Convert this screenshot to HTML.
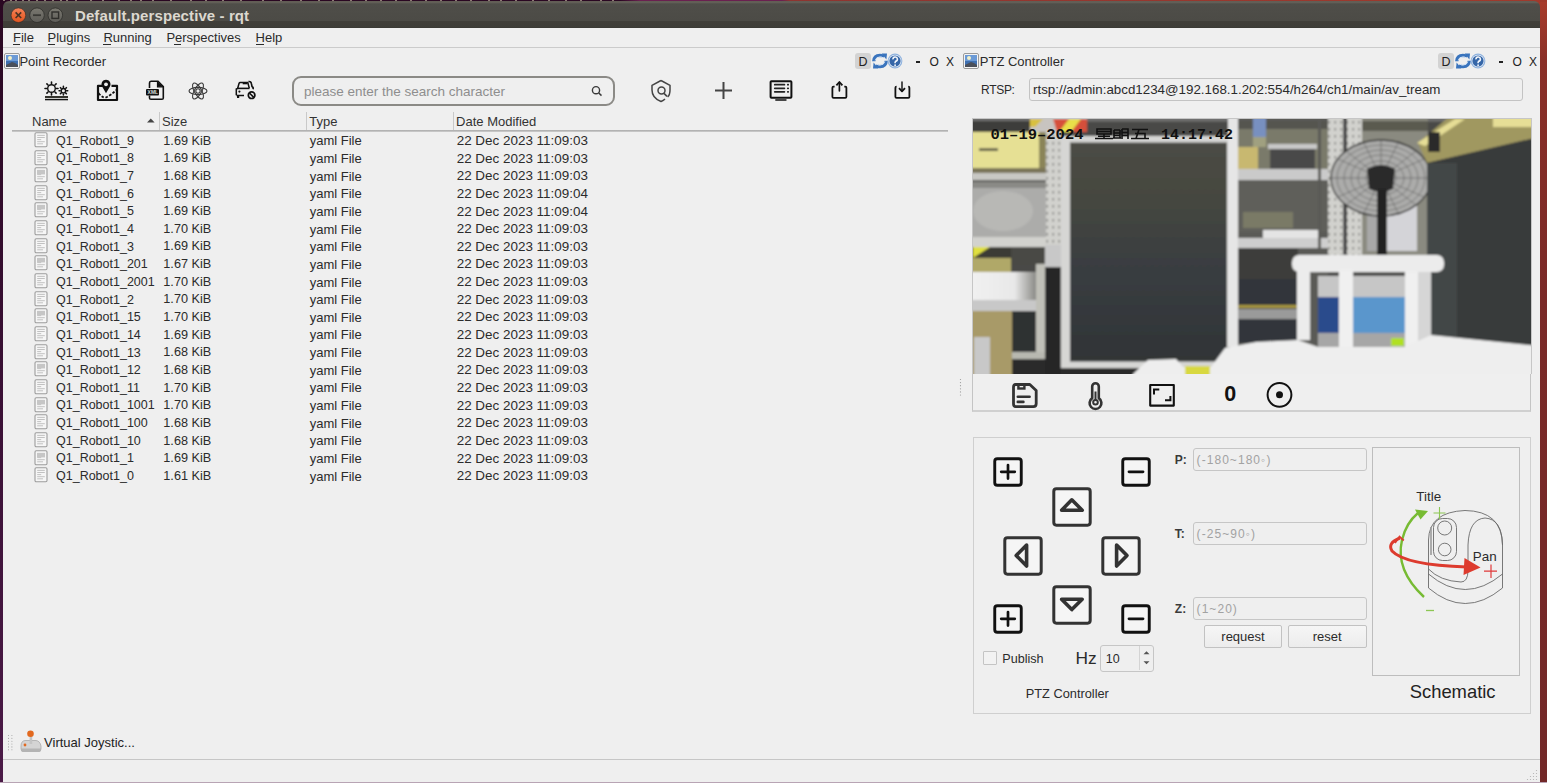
<!DOCTYPE html>
<html><head><meta charset="utf-8"><style>
html,body{margin:0;padding:0;}
body{width:1547px;height:783px;overflow:hidden;position:relative;background:#efefef;font-family:"Liberation Sans", sans-serif;}
.t{position:absolute;white-space:pre;line-height:1;}
svg{overflow:visible}
</style></head><body>
<div style="position:absolute;left:0px;top:0px;width:1547px;height:783px;background:#efefef"></div>
<div style="position:absolute;left:0px;top:0px;width:3px;height:783px;background:linear-gradient(#2a0822,#3a1035 50%,#4b1a47)"></div>
<div style="position:absolute;left:1540px;top:0px;width:7px;height:783px;background:linear-gradient(#a83c2c,#8a3028 60px,#7a2a28 300px,#722828)"></div>
<div style="position:absolute;left:0px;top:0px;width:1547px;height:2px;background:linear-gradient(90deg,#2a0722 0,#2a0722 620px,#6a2050 640px,#6a2050 782px,#8e3430 790px,#a03a2c 1547px)"></div>
<div style="position:absolute;left:3px;top:0px;width:2px;height:1px;background:#b8a898;opacity:.7"></div>
<div style="position:absolute;left:10px;top:0px;width:2px;height:1px;background:#b8a898;opacity:.7"></div>
<div style="position:absolute;left:15px;top:0px;width:2px;height:1px;background:#b8a898;opacity:.7"></div>
<div style="position:absolute;left:22px;top:0px;width:2px;height:1px;background:#b8a898;opacity:.7"></div>
<div style="position:absolute;left:28px;top:0px;width:2px;height:1px;background:#b8a898;opacity:.7"></div>
<div style="position:absolute;left:36px;top:0px;width:2px;height:1px;background:#b8a898;opacity:.7"></div>
<div style="position:absolute;left:44px;top:0px;width:2px;height:1px;background:#b8a898;opacity:.7"></div>
<div style="position:absolute;left:52px;top:0px;width:2px;height:1px;background:#b8a898;opacity:.7"></div>
<div style="position:absolute;left:60px;top:0px;width:2px;height:1px;background:#b8a898;opacity:.7"></div>
<div style="position:absolute;left:66px;top:0px;width:2px;height:1px;background:#b8a898;opacity:.7"></div>
<div style="position:absolute;left:75px;top:0px;width:2px;height:1px;background:#b8a898;opacity:.7"></div>
<div style="position:absolute;left:90px;top:0px;width:2px;height:1px;background:#b8a898;opacity:.7"></div>
<div style="position:absolute;left:102px;top:0px;width:2px;height:1px;background:#b8a898;opacity:.7"></div>
<div style="position:absolute;left:118px;top:0px;width:2px;height:1px;background:#b8a898;opacity:.7"></div>
<div style="position:absolute;left:130px;top:0px;width:2px;height:1px;background:#b8a898;opacity:.7"></div>
<div style="position:absolute;left:140px;top:0px;width:2px;height:1px;background:#b8a898;opacity:.7"></div>
<div style="position:absolute;left:152px;top:0px;width:2px;height:1px;background:#b8a898;opacity:.7"></div>
<div style="position:absolute;left:170px;top:0px;width:2px;height:1px;background:#b8a898;opacity:.7"></div>
<div style="position:absolute;left:190px;top:0px;width:2px;height:1px;background:#b8a898;opacity:.7"></div>
<div style="position:absolute;left:205px;top:0px;width:2px;height:1px;background:#b8a898;opacity:.7"></div>
<div style="position:absolute;left:222px;top:0px;width:2px;height:1px;background:#b8a898;opacity:.7"></div>
<div style="position:absolute;left:240px;top:0px;width:2px;height:1px;background:#b8a898;opacity:.7"></div>
<div style="position:absolute;left:262px;top:0px;width:2px;height:1px;background:#b8a898;opacity:.7"></div>
<div style="position:absolute;left:280px;top:0px;width:2px;height:1px;background:#b8a898;opacity:.7"></div>
<div style="position:absolute;left:300px;top:0px;width:2px;height:1px;background:#b8a898;opacity:.7"></div>
<div style="position:absolute;left:318px;top:0px;width:2px;height:1px;background:#b8a898;opacity:.7"></div>
<div style="position:absolute;left:332px;top:0px;width:2px;height:1px;background:#b8a898;opacity:.7"></div>
<div style="position:absolute;left:350px;top:0px;width:2px;height:1px;background:#b8a898;opacity:.7"></div>
<div style="position:absolute;left:365px;top:0px;width:2px;height:1px;background:#b8a898;opacity:.7"></div>
<div style="position:absolute;left:380px;top:0px;width:2px;height:1px;background:#b8a898;opacity:.7"></div>
<div style="position:absolute;left:395px;top:0px;width:2px;height:1px;background:#b8a898;opacity:.7"></div>
<div style="position:absolute;left:410px;top:0px;width:2px;height:1px;background:#b8a898;opacity:.7"></div>
<div style="position:absolute;left:425px;top:0px;width:2px;height:1px;background:#b8a898;opacity:.7"></div>
<div style="position:absolute;left:440px;top:0px;width:2px;height:1px;background:#b8a898;opacity:.7"></div>
<div style="position:absolute;left:455px;top:0px;width:2px;height:1px;background:#b8a898;opacity:.7"></div>
<div style="position:absolute;left:470px;top:0px;width:2px;height:1px;background:#b8a898;opacity:.7"></div>
<div style="position:absolute;left:488px;top:0px;width:2px;height:1px;background:#b8a898;opacity:.7"></div>
<div style="position:absolute;left:500px;top:0px;width:2px;height:1px;background:#b8a898;opacity:.7"></div>
<div style="position:absolute;left:515px;top:0px;width:2px;height:1px;background:#b8a898;opacity:.7"></div>
<div style="position:absolute;left:532px;top:0px;width:2px;height:1px;background:#b8a898;opacity:.7"></div>
<div style="position:absolute;left:548px;top:0px;width:2px;height:1px;background:#b8a898;opacity:.7"></div>
<div style="position:absolute;left:565px;top:0px;width:2px;height:1px;background:#b8a898;opacity:.7"></div>
<div style="position:absolute;left:580px;top:0px;width:2px;height:1px;background:#b8a898;opacity:.7"></div>
<div style="position:absolute;left:600px;top:0px;width:2px;height:1px;background:#b8a898;opacity:.7"></div>
<div style="position:absolute;left:612px;top:0px;width:2px;height:1px;background:#b8a898;opacity:.7"></div>
<div style="position:absolute;left:0px;top:782px;width:1547px;height:1px;background:#b8a4b4"></div>
<div style="position:absolute;left:3px;top:1px;width:12px;height:10px;background:#2a0722"></div>
<div style="position:absolute;left:1528px;top:1px;width:12px;height:10px;background:#a03a2c"></div>
<div style="position:absolute;left:3px;top:1px;width:1537px;height:27px;border-radius:6px 6px 0 0;background:linear-gradient(#5a5650 0,#6a655b 1px,#5a5852 2px,#4f4e49 3px,#4c4b46 19.5px,#413f3a 20.5px,#3e3d38 26px,#383733 27px)"></div>
<svg style="position:absolute;left:10px;top:7px;" width="56" height="17" viewBox="0 0 56 17">
<defs><linearGradient id="cb" x1="0" y1="0" x2="0" y2="1"><stop offset="0" stop-color="#f5845c"/><stop offset="0.5" stop-color="#ec6a38"/><stop offset="1" stop-color="#e05522"/></linearGradient>
<linearGradient id="gb" x1="0" y1="0" x2="0" y2="1"><stop offset="0" stop-color="#7a7870"/><stop offset="1" stop-color="#5e5d58"/></linearGradient></defs>
<circle cx="8.4" cy="8.2" r="7.3" fill="url(#cb)" stroke="#3a2a22" stroke-width="0.6"/>
<path d="M5.6 5.4 L11.2 11 M11.2 5.4 L5.6 11" stroke="#4a3324" stroke-width="1.6"/>
<circle cx="27" cy="8.2" r="7.3" fill="url(#gb)" stroke="#2f2e2b" stroke-width="0.8"/>
<rect x="23" y="7.3" width="8" height="1.8" fill="#3a3935"/>
<circle cx="45.3" cy="8.2" r="7.3" fill="url(#gb)" stroke="#2f2e2b" stroke-width="0.8"/>
<rect x="42" y="5" width="6.6" height="6.4" fill="none" stroke="#2f2e2b" stroke-width="1.4"/>
</svg>
<div class="t" style="left:75.0px;top:7.90px;font-size:15px;color:#dcd8cf;font-weight:bold;letter-spacing:0.1px;">Default.perspective - rqt</div>
<div style="position:absolute;left:3px;top:47px;width:1537px;height:1px;background:#cbcbcb"></div>
<div class="t" style="left:13.0px;top:31.00px;font-size:13px;color:#2b2b2b;font-weight:normal;letter-spacing:0px;">File</div>
<div class="t" style="left:47.5px;top:31.00px;font-size:13px;color:#2b2b2b;font-weight:normal;letter-spacing:0px;">Plugins</div>
<div class="t" style="left:103.4px;top:31.00px;font-size:13px;color:#2b2b2b;font-weight:normal;letter-spacing:0px;">Running</div>
<div class="t" style="left:166.4px;top:31.00px;font-size:13px;color:#2b2b2b;font-weight:normal;letter-spacing:0px;">Perspectives</div>
<div class="t" style="left:255.6px;top:31.00px;font-size:13px;color:#2b2b2b;font-weight:normal;letter-spacing:0px;">Help</div>
<div style="position:absolute;left:13px;top:44px;width:7px;height:1px;background:#2b2b2b"></div>
<div style="position:absolute;left:47.5px;top:44px;width:7px;height:1px;background:#2b2b2b"></div>
<div style="position:absolute;left:103.4px;top:44px;width:8px;height:1px;background:#2b2b2b"></div>
<div style="position:absolute;left:174px;top:44px;width:7px;height:1px;background:#2b2b2b"></div>
<div style="position:absolute;left:255.6px;top:44px;width:8px;height:1px;background:#2b2b2b"></div>
<svg style="position:absolute;left:4px;top:53px;" width="16" height="16" viewBox="0 0 16 16">
<rect x="0.5" y="0.5" width="15" height="15" rx="1.5" fill="#f4f4f4" stroke="#9a9a9a" stroke-width="1"/>
<rect x="2" y="2" width="12" height="12" fill="#3e6fb0"/>
<rect x="2" y="2" width="12" height="6" fill="#6b9ad6"/>
<circle cx="6" cy="5" r="2" fill="#f2f0c8"/>
<path d="M2 12 L8 9 L11 10 L14 12 L14 14 L2 14Z" fill="#4a4f5a"/>
</svg>
<div class="t" style="left:19.4px;top:55.00px;font-size:13px;color:#2b2b2b;font-weight:normal;letter-spacing:0px;">Point Recorder</div>
<div style="position:absolute;left:855px;top:53px;width:16px;height:16px;border-radius:3px;background:#d3d3d3"></div>
<div class="t" style="left:858.6px;top:55.92px;font-size:12.5px;color:#222;font-weight:normal;letter-spacing:0px;">D</div>
<svg style="position:absolute;left:871.5px;top:53px;" width="16" height="16" viewBox="0 0 16 16">
<path d="M1.8 8.2 Q2 2.6 8 2.4 Q10.6 2.4 12 3.8" fill="none" stroke="#3a74bd" stroke-width="3.4"/>
<path d="M9.6 0.6 L15 0.4 L14.4 6.6Z" fill="#3a74bd"/>
<path d="M3.2 7.4 Q4 4 8 3.9 Q10 3.9 11 4.8" fill="none" stroke="#d8e6f6" stroke-width="1"/>
<path d="M14.2 7.8 Q14 13.4 8 13.6 Q5.4 13.6 4 12.2" fill="none" stroke="#3a74bd" stroke-width="3.4"/>
<path d="M6.4 15.4 L1 15.6 L1.6 9.4Z" fill="#3a74bd"/>
<path d="M12.8 8.6 Q12 12 8 12.1 Q6 12.1 5 11.2" fill="none" stroke="#d8e6f6" stroke-width="1"/>
</svg>
<svg style="position:absolute;left:887px;top:53px;" width="16" height="16" viewBox="0 0 16 16">
<circle cx="8" cy="8" r="7.4" fill="#8fb2de"/>
<circle cx="8" cy="8" r="6.3" fill="#e6eef8"/>
<circle cx="8" cy="8" r="5.6" fill="#3566a8"/>
<path d="M6 6.4 A2.2 2.2 0 1 1 8.5 8.4 L8.1 9.6 V10.3" fill="none" stroke="#f2f6fb" stroke-width="1.6"/>
<circle cx="8.1" cy="12.2" r="0.9" fill="#f2f6fb"/>
</svg>
<div style="position:absolute;left:916px;top:61px;width:4px;height:2px;background:#222"></div>
<div class="t" style="left:929.5px;top:55.84px;font-size:12px;color:#222;font-weight:normal;letter-spacing:0px;">O</div>
<div class="t" style="left:946.0px;top:55.84px;font-size:12px;color:#222;font-weight:normal;letter-spacing:0px;">X</div>
<svg style="position:absolute;left:963px;top:53px;" width="16" height="16" viewBox="0 0 16 16">
<rect x="0.5" y="0.5" width="15" height="15" rx="1.5" fill="#f4f4f4" stroke="#9a9a9a" stroke-width="1"/>
<rect x="2" y="2" width="12" height="12" fill="#3e6fb0"/>
<rect x="2" y="2" width="12" height="6" fill="#6b9ad6"/>
<circle cx="6" cy="5" r="2" fill="#f2f0c8"/>
<path d="M2 12 L8 9 L11 10 L14 12 L14 14 L2 14Z" fill="#4a4f5a"/>
</svg>
<div class="t" style="left:979.8px;top:55.00px;font-size:13px;color:#2b2b2b;font-weight:normal;letter-spacing:0px;">PTZ Controller</div>
<div style="position:absolute;left:1438px;top:53px;width:16px;height:16px;border-radius:3px;background:#d3d3d3"></div>
<div class="t" style="left:1441.6px;top:55.92px;font-size:12.5px;color:#222;font-weight:normal;letter-spacing:0px;">D</div>
<svg style="position:absolute;left:1454.5px;top:53px;" width="16" height="16" viewBox="0 0 16 16">
<path d="M1.8 8.2 Q2 2.6 8 2.4 Q10.6 2.4 12 3.8" fill="none" stroke="#3a74bd" stroke-width="3.4"/>
<path d="M9.6 0.6 L15 0.4 L14.4 6.6Z" fill="#3a74bd"/>
<path d="M3.2 7.4 Q4 4 8 3.9 Q10 3.9 11 4.8" fill="none" stroke="#d8e6f6" stroke-width="1"/>
<path d="M14.2 7.8 Q14 13.4 8 13.6 Q5.4 13.6 4 12.2" fill="none" stroke="#3a74bd" stroke-width="3.4"/>
<path d="M6.4 15.4 L1 15.6 L1.6 9.4Z" fill="#3a74bd"/>
<path d="M12.8 8.6 Q12 12 8 12.1 Q6 12.1 5 11.2" fill="none" stroke="#d8e6f6" stroke-width="1"/>
</svg>
<svg style="position:absolute;left:1470px;top:53px;" width="16" height="16" viewBox="0 0 16 16">
<circle cx="8" cy="8" r="7.4" fill="#8fb2de"/>
<circle cx="8" cy="8" r="6.3" fill="#e6eef8"/>
<circle cx="8" cy="8" r="5.6" fill="#3566a8"/>
<path d="M6 6.4 A2.2 2.2 0 1 1 8.5 8.4 L8.1 9.6 V10.3" fill="none" stroke="#f2f6fb" stroke-width="1.6"/>
<circle cx="8.1" cy="12.2" r="0.9" fill="#f2f6fb"/>
</svg>
<div style="position:absolute;left:1499px;top:61px;width:4px;height:2px;background:#222"></div>
<div class="t" style="left:1512.5px;top:55.84px;font-size:12px;color:#222;font-weight:normal;letter-spacing:0px;">O</div>
<div class="t" style="left:1529.0px;top:55.84px;font-size:12px;color:#222;font-weight:normal;letter-spacing:0px;">X</div>
<svg style="position:absolute;left:43px;top:80px;" width="27" height="22" viewBox="0 0 27 22">
<g fill="none" stroke="#111" stroke-width="1.4">
<circle cx="8.5" cy="8.5" r="3.8"/>
<circle cx="20.4" cy="10.7" r="2.2"/>
</g>
<g stroke="#111" stroke-width="1.6" stroke-linecap="round">
<path d="M8.5 2 V3.6 M8.5 13.4 V15 M2 8.5 H3.6 M13.4 8.5 H15 M3.9 3.9 L5 5 M12 12 L13.1 13.1 M3.9 13.1 L5 12 M12 5 L13.1 3.9"/>
<path d="M20.4 6.4 V7.4 M20.4 14 V15 M16.1 10.7 H17.1 M23.7 10.7 H24.7 M17.4 7.7 L18 8.3 M22.8 13.1 L23.4 13.7 M17.4 13.7 L18 13.1 M22.8 8.3 L23.4 7.7"/>
</g>
<rect x="2" y="16" width="23" height="2.2" fill="#33332d"/>
<rect x="2" y="19" width="23" height="1.3" fill="#111"/>
</svg>
<svg style="position:absolute;left:96px;top:79px;" width="23" height="23" viewBox="0 0 23 23">
<path d="M7.5 6.8 H2 V21 H21 V6.8 H15.5" fill="none" stroke="#111" stroke-width="2.2" stroke-linejoin="round"/>
<path d="M10 14.2 L6.1 7.4 A4.5 4.5 0 1 1 13.9 7.4 Z" fill="#111"/>
<circle cx="10" cy="5.3" r="1.9" fill="#efefef"/>
<path d="M2.5 14 Q7 20 11 18 Q15 16 20.5 11" fill="none" stroke="#111" stroke-width="1.7" stroke-dasharray="2.6 1.6"/>
</svg>
<svg style="position:absolute;left:145px;top:80px;" width="21" height="21" viewBox="0 0 21 21">
<path d="M4.5 8 V3 Q4.5 1.3 6 1.3 H13 L18.3 6.6 V18 Q18.3 19.3 17 19.3 H6 Q4.5 19.3 4.5 18 V15.5" fill="none" stroke="#111" stroke-width="1.6"/>
<path d="M12.5 1.5 V6.8 H18" fill="#111" stroke="#111" stroke-width="1.2"/>
<rect x="1" y="9" width="13" height="6.5" rx="1" fill="#111"/>
<text x="2.6" y="14" font-size="5" font-family="Liberation Sans" fill="#ddd" font-weight="bold">XML</text>
</svg>
<svg style="position:absolute;left:188px;top:82px;" width="20" height="18" viewBox="0 0 20 18">
<g fill="none" stroke="#3a3a3a" stroke-width="1.1">
<ellipse cx="10" cy="9" rx="9" ry="3.6"/>
<ellipse cx="10" cy="9" rx="9" ry="3.6" transform="rotate(60 10 9)"/>
<ellipse cx="10" cy="9" rx="9" ry="3.6" transform="rotate(-60 10 9)"/>
<circle cx="10" cy="9" r="2.2"/>
</g>
</svg>
<svg style="position:absolute;left:235px;top:80px;" width="22" height="21" viewBox="0 0 22 21">
<path d="M7.7 3.5 H12.5" stroke="#111" stroke-width="1.6"/>
<path d="M1.3 15.3 V9 L2.7 8.3 L4 3.5 Q4.3 2.6 5.2 2.6 H12.8 L14.3 8.3" fill="none" stroke="#111" stroke-width="1.5"/>
<path d="M2 8.4 H14.5" stroke="#111" stroke-width="1.6"/>
<path d="M1.5 15.5 H9" stroke="#111" stroke-width="1.5"/>
<rect x="2" y="15" width="2.2" height="3" fill="#111"/>
<circle cx="4.4" cy="11.6" r="1.1" fill="#111"/>
<path d="M13.5 1.5 Q16 1 16.5 4 L17 6.5 Q18.7 7.5 18 9.3" fill="none" stroke="#111" stroke-width="1.6"/>
<circle cx="16.6" cy="15.2" r="3.3" fill="none" stroke="#111" stroke-width="1.7"/>
<path d="M14.4 13 L18.8 17.4" stroke="#111" stroke-width="1.6"/>
</svg>
<div style="position:absolute;left:292px;top:76px;width:319px;height:26px;border:2px solid #8b8a86;border-radius:9px;"></div>
<div class="t" style="left:304.0px;top:85.27px;font-size:13.5px;color:#8e8e8e;font-weight:normal;letter-spacing:0px;">please enter the search character</div>
<svg style="position:absolute;left:590px;top:84px;" width="14" height="14" viewBox="0 0 14 14">
<circle cx="6" cy="6.2" r="3.6" fill="none" stroke="#3a3a3a" stroke-width="1.4"/>
<path d="M8.8 9 L11.5 11.6" stroke="#3a3a3a" stroke-width="1.5"/>
</svg>
<svg style="position:absolute;left:650px;top:79px;" width="22" height="24" viewBox="0 0 22 24">
<path d="M11 1.5 L20 6.3 V11 Q20 16 17.6 18" fill="none" stroke="#444" stroke-width="1.5" stroke-linejoin="round"/>
<path d="M11 1.5 L2 6.3 V11 Q2 19 11 22.5 Q13.5 21.4 15 20" fill="none" stroke="#444" stroke-width="1.5" stroke-linejoin="round"/>
<circle cx="11.5" cy="11.6" r="3.5" fill="none" stroke="#444" stroke-width="1.5"/>
<path d="M14 14.4 L17 17.3" stroke="#444" stroke-width="1.6"/>
</svg>
<svg style="position:absolute;left:714px;top:81px;" width="20" height="20" viewBox="0 0 20 20">
<path d="M9.5 0.9 V17.9 M1 9.4 H18" stroke="#444" stroke-width="2"/>
</svg>
<svg style="position:absolute;left:769px;top:79px;" width="25" height="23" viewBox="0 0 25 23">
<rect x="1.6" y="2.2" width="20.8" height="16.5" rx="0.8" fill="none" stroke="#111" stroke-width="2"/>
<path d="M5.8 5.7 H15.4 M5.8 9.3 H15.4 M5.8 12.8 H15.4" stroke="#222" stroke-width="1.8" stroke-linecap="round"/>
<path d="M18.8 5.7 H19.2 M18.8 9.3 H19.2 M18.8 12.8 H19.2" stroke="#222" stroke-width="1.8" stroke-linecap="round"/>
<path d="M6.8 21 H17" stroke="#111" stroke-width="1.4" stroke-linecap="round"/>
</svg>
<svg style="position:absolute;left:830px;top:80px;" width="19" height="20" viewBox="0 0 19 20">
<path d="M4.6 6.6 H3.5 Q2.4 6.6 2.4 7.8 V16.8 Q2.4 17.9 3.5 17.9 H15.3 Q16.4 17.9 16.4 16.8 V7.8 Q16.4 6.6 15.3 6.6 H14.3" fill="none" stroke="#111" stroke-width="1.8"/>
<path d="M9.4 10.8 V2.8" stroke="#111" stroke-width="1.7" stroke-linecap="round"/>
<path d="M6.4 5.4 L9.4 2 L12.4 5.4" fill="none" stroke="#111" stroke-width="1.8" stroke-linejoin="round"/>
</svg>
<svg style="position:absolute;left:893px;top:80px;" width="19" height="20" viewBox="0 0 19 20">
<path d="M3.6 6.6 H3.5 Q2.4 6.6 2.4 7.8 V16.8 Q2.4 17.9 3.5 17.9 H15.3 Q16.4 17.9 16.4 16.8 V7.8 Q16.4 6.6 15.3 6.6 H15.2" fill="none" stroke="#111" stroke-width="1.8"/>
<path d="M9 2 V10.8" stroke="#333" stroke-width="1.7" stroke-linecap="round"/>
<path d="M6 8.2 L9 11.3 L12 8.2" fill="none" stroke="#111" stroke-width="1.8" stroke-linejoin="round"/>
</svg>
<div class="t" style="left:32.0px;top:114.60px;font-size:13px;color:#333;font-weight:normal;letter-spacing:0px;">Name</div>
<svg style="position:absolute;left:147px;top:118px;" width="8" height="5" viewBox="0 0 8 5"><path d="M0 4.5 L3.8 0.5 L7.6 4.5Z" fill="#444"/></svg>
<div style="position:absolute;left:159px;top:112px;width:1px;height:18px;background:#c9c9c9"></div>
<div class="t" style="left:162.0px;top:114.60px;font-size:13px;color:#333;font-weight:normal;letter-spacing:0px;">Size</div>
<div style="position:absolute;left:306px;top:112px;width:1px;height:18px;background:#c9c9c9"></div>
<div class="t" style="left:309.3px;top:114.60px;font-size:13px;color:#333;font-weight:normal;letter-spacing:0px;">Type</div>
<div style="position:absolute;left:453px;top:112px;width:1px;height:18px;background:#c9c9c9"></div>
<div class="t" style="left:456.1px;top:114.60px;font-size:13px;color:#333;font-weight:normal;letter-spacing:0px;">Date Modified</div>
<div style="position:absolute;left:12px;top:130px;width:936px;height:2px;background:linear-gradient(#a9a9a9,#cfcfcf)"></div>
<svg style="position:absolute;left:34px;top:132px;" width="14" height="16" viewBox="0 0 14 16">
<rect x="1" y="0.8" width="12" height="13.9" rx="1.2" fill="#f6f6f6" stroke="#9c9c9c" stroke-width="1.1"/>
<path d="M3.2 3.4 H10.8 M3.2 5.5 H10.8 M3.2 7.6 H7.2 M3.2 9.7 H10.8 M3.2 11.8 H9" stroke="#b4b4b4" stroke-width="0.8"/>
</svg>
<div class="t" style="left:56.0px;top:134.72px;font-size:12.5px;color:#2b2b2b;font-weight:normal;letter-spacing:0px;">Q1_Robot1_9</div>
<div class="t" style="left:163.3px;top:134.55px;font-size:12.7px;color:#2b2b2b;font-weight:normal;letter-spacing:0px;">1.69 KiB</div>
<div class="t" style="left:309.7px;top:134.30px;font-size:13px;color:#2b2b2b;font-weight:normal;letter-spacing:0px;">yaml File</div>
<div class="t" style="left:456.7px;top:133.91px;font-size:13.45px;color:#2b2b2b;font-weight:normal;letter-spacing:0px;">22 Dec 2023 11:09:03</div>
<svg style="position:absolute;left:34px;top:150px;" width="14" height="16" viewBox="0 0 14 16">
<rect x="1" y="0.8" width="12" height="13.9" rx="1.2" fill="#f6f6f6" stroke="#9c9c9c" stroke-width="1.1"/>
<path d="M3.2 3.4 H10.8 M3.2 5.5 H10.8 M3.2 7.6 H7.2 M3.2 9.7 H10.8 M3.2 11.8 H9" stroke="#b4b4b4" stroke-width="0.8"/>
</svg>
<div class="t" style="left:56.0px;top:152.37px;font-size:12.5px;color:#2b2b2b;font-weight:normal;letter-spacing:0px;">Q1_Robot1_8</div>
<div class="t" style="left:163.3px;top:152.20px;font-size:12.7px;color:#2b2b2b;font-weight:normal;letter-spacing:0px;">1.69 KiB</div>
<div class="t" style="left:309.7px;top:151.95px;font-size:13px;color:#2b2b2b;font-weight:normal;letter-spacing:0px;">yaml File</div>
<div class="t" style="left:456.7px;top:151.56px;font-size:13.45px;color:#2b2b2b;font-weight:normal;letter-spacing:0px;">22 Dec 2023 11:09:03</div>
<svg style="position:absolute;left:34px;top:167px;" width="14" height="16" viewBox="0 0 14 16">
<rect x="1" y="0.8" width="12" height="13.9" rx="1.2" fill="#f6f6f6" stroke="#9c9c9c" stroke-width="1.1"/>
<path d="M3.2 3.4 H10.8 M3.2 5.5 H10.8 M3.2 7.6 H7.2 M3.2 9.7 H10.8 M3.2 11.8 H9" stroke="#b4b4b4" stroke-width="0.8"/>
<rect x="3" y="3" width="8" height="4.4" fill="#c6c6c6"/></svg>
<div class="t" style="left:56.0px;top:170.02px;font-size:12.5px;color:#2b2b2b;font-weight:normal;letter-spacing:0px;">Q1_Robot1_7</div>
<div class="t" style="left:163.3px;top:169.85px;font-size:12.7px;color:#2b2b2b;font-weight:normal;letter-spacing:0px;">1.68 KiB</div>
<div class="t" style="left:309.7px;top:169.60px;font-size:13px;color:#2b2b2b;font-weight:normal;letter-spacing:0px;">yaml File</div>
<div class="t" style="left:456.7px;top:169.21px;font-size:13.45px;color:#2b2b2b;font-weight:normal;letter-spacing:0px;">22 Dec 2023 11:09:03</div>
<svg style="position:absolute;left:34px;top:185px;" width="14" height="16" viewBox="0 0 14 16">
<rect x="1" y="0.8" width="12" height="13.9" rx="1.2" fill="#f6f6f6" stroke="#9c9c9c" stroke-width="1.1"/>
<path d="M3.2 3.4 H10.8 M3.2 5.5 H10.8 M3.2 7.6 H7.2 M3.2 9.7 H10.8 M3.2 11.8 H9" stroke="#b4b4b4" stroke-width="0.8"/>
</svg>
<div class="t" style="left:56.0px;top:187.67px;font-size:12.5px;color:#2b2b2b;font-weight:normal;letter-spacing:0px;">Q1_Robot1_6</div>
<div class="t" style="left:163.3px;top:187.50px;font-size:12.7px;color:#2b2b2b;font-weight:normal;letter-spacing:0px;">1.69 KiB</div>
<div class="t" style="left:309.7px;top:187.25px;font-size:13px;color:#2b2b2b;font-weight:normal;letter-spacing:0px;">yaml File</div>
<div class="t" style="left:456.7px;top:186.86px;font-size:13.45px;color:#2b2b2b;font-weight:normal;letter-spacing:0px;">22 Dec 2023 11:09:04</div>
<svg style="position:absolute;left:34px;top:202px;" width="14" height="16" viewBox="0 0 14 16">
<rect x="1" y="0.8" width="12" height="13.9" rx="1.2" fill="#f6f6f6" stroke="#9c9c9c" stroke-width="1.1"/>
<path d="M3.2 3.4 H10.8 M3.2 5.5 H10.8 M3.2 7.6 H7.2 M3.2 9.7 H10.8 M3.2 11.8 H9" stroke="#b4b4b4" stroke-width="0.8"/>
<rect x="3" y="3" width="8" height="4.4" fill="#c6c6c6"/></svg>
<div class="t" style="left:56.0px;top:205.32px;font-size:12.5px;color:#2b2b2b;font-weight:normal;letter-spacing:0px;">Q1_Robot1_5</div>
<div class="t" style="left:163.3px;top:205.15px;font-size:12.7px;color:#2b2b2b;font-weight:normal;letter-spacing:0px;">1.69 KiB</div>
<div class="t" style="left:309.7px;top:204.90px;font-size:13px;color:#2b2b2b;font-weight:normal;letter-spacing:0px;">yaml File</div>
<div class="t" style="left:456.7px;top:204.51px;font-size:13.45px;color:#2b2b2b;font-weight:normal;letter-spacing:0px;">22 Dec 2023 11:09:04</div>
<svg style="position:absolute;left:34px;top:220px;" width="14" height="16" viewBox="0 0 14 16">
<rect x="1" y="0.8" width="12" height="13.9" rx="1.2" fill="#f6f6f6" stroke="#9c9c9c" stroke-width="1.1"/>
<path d="M3.2 3.4 H10.8 M3.2 5.5 H10.8 M3.2 7.6 H7.2 M3.2 9.7 H10.8 M3.2 11.8 H9" stroke="#b4b4b4" stroke-width="0.8"/>
</svg>
<div class="t" style="left:56.0px;top:222.97px;font-size:12.5px;color:#2b2b2b;font-weight:normal;letter-spacing:0px;">Q1_Robot1_4</div>
<div class="t" style="left:163.3px;top:222.80px;font-size:12.7px;color:#2b2b2b;font-weight:normal;letter-spacing:0px;">1.70 KiB</div>
<div class="t" style="left:309.7px;top:222.55px;font-size:13px;color:#2b2b2b;font-weight:normal;letter-spacing:0px;">yaml File</div>
<div class="t" style="left:456.7px;top:222.16px;font-size:13.45px;color:#2b2b2b;font-weight:normal;letter-spacing:0px;">22 Dec 2023 11:09:03</div>
<svg style="position:absolute;left:34px;top:238px;" width="14" height="16" viewBox="0 0 14 16">
<rect x="1" y="0.8" width="12" height="13.9" rx="1.2" fill="#f6f6f6" stroke="#9c9c9c" stroke-width="1.1"/>
<path d="M3.2 3.4 H10.8 M3.2 5.5 H10.8 M3.2 7.6 H7.2 M3.2 9.7 H10.8 M3.2 11.8 H9" stroke="#b4b4b4" stroke-width="0.8"/>
</svg>
<div class="t" style="left:56.0px;top:240.62px;font-size:12.5px;color:#2b2b2b;font-weight:normal;letter-spacing:0px;">Q1_Robot1_3</div>
<div class="t" style="left:163.3px;top:240.45px;font-size:12.7px;color:#2b2b2b;font-weight:normal;letter-spacing:0px;">1.69 KiB</div>
<div class="t" style="left:309.7px;top:240.20px;font-size:13px;color:#2b2b2b;font-weight:normal;letter-spacing:0px;">yaml File</div>
<div class="t" style="left:456.7px;top:239.81px;font-size:13.45px;color:#2b2b2b;font-weight:normal;letter-spacing:0px;">22 Dec 2023 11:09:03</div>
<svg style="position:absolute;left:34px;top:255px;" width="14" height="16" viewBox="0 0 14 16">
<rect x="1" y="0.8" width="12" height="13.9" rx="1.2" fill="#f6f6f6" stroke="#9c9c9c" stroke-width="1.1"/>
<path d="M3.2 3.4 H10.8 M3.2 5.5 H10.8 M3.2 7.6 H7.2 M3.2 9.7 H10.8 M3.2 11.8 H9" stroke="#b4b4b4" stroke-width="0.8"/>
<rect x="3" y="3" width="8" height="4.4" fill="#c6c6c6"/></svg>
<div class="t" style="left:56.0px;top:258.27px;font-size:12.5px;color:#2b2b2b;font-weight:normal;letter-spacing:0px;">Q1_Robot1_201</div>
<div class="t" style="left:163.3px;top:258.10px;font-size:12.7px;color:#2b2b2b;font-weight:normal;letter-spacing:0px;">1.67 KiB</div>
<div class="t" style="left:309.7px;top:257.85px;font-size:13px;color:#2b2b2b;font-weight:normal;letter-spacing:0px;">yaml File</div>
<div class="t" style="left:456.7px;top:257.46px;font-size:13.45px;color:#2b2b2b;font-weight:normal;letter-spacing:0px;">22 Dec 2023 11:09:03</div>
<svg style="position:absolute;left:34px;top:273px;" width="14" height="16" viewBox="0 0 14 16">
<rect x="1" y="0.8" width="12" height="13.9" rx="1.2" fill="#f6f6f6" stroke="#9c9c9c" stroke-width="1.1"/>
<path d="M3.2 3.4 H10.8 M3.2 5.5 H10.8 M3.2 7.6 H7.2 M3.2 9.7 H10.8 M3.2 11.8 H9" stroke="#b4b4b4" stroke-width="0.8"/>
</svg>
<div class="t" style="left:56.0px;top:275.92px;font-size:12.5px;color:#2b2b2b;font-weight:normal;letter-spacing:0px;">Q1_Robot1_2001</div>
<div class="t" style="left:163.3px;top:275.75px;font-size:12.7px;color:#2b2b2b;font-weight:normal;letter-spacing:0px;">1.70 KiB</div>
<div class="t" style="left:309.7px;top:275.50px;font-size:13px;color:#2b2b2b;font-weight:normal;letter-spacing:0px;">yaml File</div>
<div class="t" style="left:456.7px;top:275.11px;font-size:13.45px;color:#2b2b2b;font-weight:normal;letter-spacing:0px;">22 Dec 2023 11:09:03</div>
<svg style="position:absolute;left:34px;top:291px;" width="14" height="16" viewBox="0 0 14 16">
<rect x="1" y="0.8" width="12" height="13.9" rx="1.2" fill="#f6f6f6" stroke="#9c9c9c" stroke-width="1.1"/>
<path d="M3.2 3.4 H10.8 M3.2 5.5 H10.8 M3.2 7.6 H7.2 M3.2 9.7 H10.8 M3.2 11.8 H9" stroke="#b4b4b4" stroke-width="0.8"/>
</svg>
<div class="t" style="left:56.0px;top:293.57px;font-size:12.5px;color:#2b2b2b;font-weight:normal;letter-spacing:0px;">Q1_Robot1_2</div>
<div class="t" style="left:163.3px;top:293.40px;font-size:12.7px;color:#2b2b2b;font-weight:normal;letter-spacing:0px;">1.70 KiB</div>
<div class="t" style="left:309.7px;top:293.15px;font-size:13px;color:#2b2b2b;font-weight:normal;letter-spacing:0px;">yaml File</div>
<div class="t" style="left:456.7px;top:292.76px;font-size:13.45px;color:#2b2b2b;font-weight:normal;letter-spacing:0px;">22 Dec 2023 11:09:03</div>
<svg style="position:absolute;left:34px;top:308px;" width="14" height="16" viewBox="0 0 14 16">
<rect x="1" y="0.8" width="12" height="13.9" rx="1.2" fill="#f6f6f6" stroke="#9c9c9c" stroke-width="1.1"/>
<path d="M3.2 3.4 H10.8 M3.2 5.5 H10.8 M3.2 7.6 H7.2 M3.2 9.7 H10.8 M3.2 11.8 H9" stroke="#b4b4b4" stroke-width="0.8"/>
<rect x="3" y="3" width="8" height="4.4" fill="#c6c6c6"/></svg>
<div class="t" style="left:56.0px;top:311.22px;font-size:12.5px;color:#2b2b2b;font-weight:normal;letter-spacing:0px;">Q1_Robot1_15</div>
<div class="t" style="left:163.3px;top:311.05px;font-size:12.7px;color:#2b2b2b;font-weight:normal;letter-spacing:0px;">1.70 KiB</div>
<div class="t" style="left:309.7px;top:310.80px;font-size:13px;color:#2b2b2b;font-weight:normal;letter-spacing:0px;">yaml File</div>
<div class="t" style="left:456.7px;top:310.41px;font-size:13.45px;color:#2b2b2b;font-weight:normal;letter-spacing:0px;">22 Dec 2023 11:09:03</div>
<svg style="position:absolute;left:34px;top:326px;" width="14" height="16" viewBox="0 0 14 16">
<rect x="1" y="0.8" width="12" height="13.9" rx="1.2" fill="#f6f6f6" stroke="#9c9c9c" stroke-width="1.1"/>
<path d="M3.2 3.4 H10.8 M3.2 5.5 H10.8 M3.2 7.6 H7.2 M3.2 9.7 H10.8 M3.2 11.8 H9" stroke="#b4b4b4" stroke-width="0.8"/>
</svg>
<div class="t" style="left:56.0px;top:328.87px;font-size:12.5px;color:#2b2b2b;font-weight:normal;letter-spacing:0px;">Q1_Robot1_14</div>
<div class="t" style="left:163.3px;top:328.70px;font-size:12.7px;color:#2b2b2b;font-weight:normal;letter-spacing:0px;">1.69 KiB</div>
<div class="t" style="left:309.7px;top:328.45px;font-size:13px;color:#2b2b2b;font-weight:normal;letter-spacing:0px;">yaml File</div>
<div class="t" style="left:456.7px;top:328.06px;font-size:13.45px;color:#2b2b2b;font-weight:normal;letter-spacing:0px;">22 Dec 2023 11:09:03</div>
<svg style="position:absolute;left:34px;top:344px;" width="14" height="16" viewBox="0 0 14 16">
<rect x="1" y="0.8" width="12" height="13.9" rx="1.2" fill="#f6f6f6" stroke="#9c9c9c" stroke-width="1.1"/>
<path d="M3.2 3.4 H10.8 M3.2 5.5 H10.8 M3.2 7.6 H7.2 M3.2 9.7 H10.8 M3.2 11.8 H9" stroke="#b4b4b4" stroke-width="0.8"/>
</svg>
<div class="t" style="left:56.0px;top:346.52px;font-size:12.5px;color:#2b2b2b;font-weight:normal;letter-spacing:0px;">Q1_Robot1_13</div>
<div class="t" style="left:163.3px;top:346.35px;font-size:12.7px;color:#2b2b2b;font-weight:normal;letter-spacing:0px;">1.68 KiB</div>
<div class="t" style="left:309.7px;top:346.10px;font-size:13px;color:#2b2b2b;font-weight:normal;letter-spacing:0px;">yaml File</div>
<div class="t" style="left:456.7px;top:345.71px;font-size:13.45px;color:#2b2b2b;font-weight:normal;letter-spacing:0px;">22 Dec 2023 11:09:03</div>
<svg style="position:absolute;left:34px;top:361px;" width="14" height="16" viewBox="0 0 14 16">
<rect x="1" y="0.8" width="12" height="13.9" rx="1.2" fill="#f6f6f6" stroke="#9c9c9c" stroke-width="1.1"/>
<path d="M3.2 3.4 H10.8 M3.2 5.5 H10.8 M3.2 7.6 H7.2 M3.2 9.7 H10.8 M3.2 11.8 H9" stroke="#b4b4b4" stroke-width="0.8"/>
<rect x="3" y="3" width="8" height="4.4" fill="#c6c6c6"/></svg>
<div class="t" style="left:56.0px;top:364.17px;font-size:12.5px;color:#2b2b2b;font-weight:normal;letter-spacing:0px;">Q1_Robot1_12</div>
<div class="t" style="left:163.3px;top:364.00px;font-size:12.7px;color:#2b2b2b;font-weight:normal;letter-spacing:0px;">1.68 KiB</div>
<div class="t" style="left:309.7px;top:363.75px;font-size:13px;color:#2b2b2b;font-weight:normal;letter-spacing:0px;">yaml File</div>
<div class="t" style="left:456.7px;top:363.36px;font-size:13.45px;color:#2b2b2b;font-weight:normal;letter-spacing:0px;">22 Dec 2023 11:09:03</div>
<svg style="position:absolute;left:34px;top:379px;" width="14" height="16" viewBox="0 0 14 16">
<rect x="1" y="0.8" width="12" height="13.9" rx="1.2" fill="#f6f6f6" stroke="#9c9c9c" stroke-width="1.1"/>
<path d="M3.2 3.4 H10.8 M3.2 5.5 H10.8 M3.2 7.6 H7.2 M3.2 9.7 H10.8 M3.2 11.8 H9" stroke="#b4b4b4" stroke-width="0.8"/>
</svg>
<div class="t" style="left:56.0px;top:381.82px;font-size:12.5px;color:#2b2b2b;font-weight:normal;letter-spacing:0px;">Q1_Robot1_11</div>
<div class="t" style="left:163.3px;top:381.65px;font-size:12.7px;color:#2b2b2b;font-weight:normal;letter-spacing:0px;">1.70 KiB</div>
<div class="t" style="left:309.7px;top:381.40px;font-size:13px;color:#2b2b2b;font-weight:normal;letter-spacing:0px;">yaml File</div>
<div class="t" style="left:456.7px;top:381.01px;font-size:13.45px;color:#2b2b2b;font-weight:normal;letter-spacing:0px;">22 Dec 2023 11:09:03</div>
<svg style="position:absolute;left:34px;top:397px;" width="14" height="16" viewBox="0 0 14 16">
<rect x="1" y="0.8" width="12" height="13.9" rx="1.2" fill="#f6f6f6" stroke="#9c9c9c" stroke-width="1.1"/>
<path d="M3.2 3.4 H10.8 M3.2 5.5 H10.8 M3.2 7.6 H7.2 M3.2 9.7 H10.8 M3.2 11.8 H9" stroke="#b4b4b4" stroke-width="0.8"/>
<rect x="3" y="3" width="8" height="4.4" fill="#c6c6c6"/></svg>
<div class="t" style="left:56.0px;top:399.47px;font-size:12.5px;color:#2b2b2b;font-weight:normal;letter-spacing:0px;">Q1_Robot1_1001</div>
<div class="t" style="left:163.3px;top:399.30px;font-size:12.7px;color:#2b2b2b;font-weight:normal;letter-spacing:0px;">1.70 KiB</div>
<div class="t" style="left:309.7px;top:399.05px;font-size:13px;color:#2b2b2b;font-weight:normal;letter-spacing:0px;">yaml File</div>
<div class="t" style="left:456.7px;top:398.66px;font-size:13.45px;color:#2b2b2b;font-weight:normal;letter-spacing:0px;">22 Dec 2023 11:09:03</div>
<svg style="position:absolute;left:34px;top:414px;" width="14" height="16" viewBox="0 0 14 16">
<rect x="1" y="0.8" width="12" height="13.9" rx="1.2" fill="#f6f6f6" stroke="#9c9c9c" stroke-width="1.1"/>
<path d="M3.2 3.4 H10.8 M3.2 5.5 H10.8 M3.2 7.6 H7.2 M3.2 9.7 H10.8 M3.2 11.8 H9" stroke="#b4b4b4" stroke-width="0.8"/>
</svg>
<div class="t" style="left:56.0px;top:417.12px;font-size:12.5px;color:#2b2b2b;font-weight:normal;letter-spacing:0px;">Q1_Robot1_100</div>
<div class="t" style="left:163.3px;top:416.95px;font-size:12.7px;color:#2b2b2b;font-weight:normal;letter-spacing:0px;">1.68 KiB</div>
<div class="t" style="left:309.7px;top:416.70px;font-size:13px;color:#2b2b2b;font-weight:normal;letter-spacing:0px;">yaml File</div>
<div class="t" style="left:456.7px;top:416.31px;font-size:13.45px;color:#2b2b2b;font-weight:normal;letter-spacing:0px;">22 Dec 2023 11:09:03</div>
<svg style="position:absolute;left:34px;top:432px;" width="14" height="16" viewBox="0 0 14 16">
<rect x="1" y="0.8" width="12" height="13.9" rx="1.2" fill="#f6f6f6" stroke="#9c9c9c" stroke-width="1.1"/>
<path d="M3.2 3.4 H10.8 M3.2 5.5 H10.8 M3.2 7.6 H7.2 M3.2 9.7 H10.8 M3.2 11.8 H9" stroke="#b4b4b4" stroke-width="0.8"/>
</svg>
<div class="t" style="left:56.0px;top:434.77px;font-size:12.5px;color:#2b2b2b;font-weight:normal;letter-spacing:0px;">Q1_Robot1_10</div>
<div class="t" style="left:163.3px;top:434.60px;font-size:12.7px;color:#2b2b2b;font-weight:normal;letter-spacing:0px;">1.68 KiB</div>
<div class="t" style="left:309.7px;top:434.35px;font-size:13px;color:#2b2b2b;font-weight:normal;letter-spacing:0px;">yaml File</div>
<div class="t" style="left:456.7px;top:433.96px;font-size:13.45px;color:#2b2b2b;font-weight:normal;letter-spacing:0px;">22 Dec 2023 11:09:03</div>
<svg style="position:absolute;left:34px;top:450px;" width="14" height="16" viewBox="0 0 14 16">
<rect x="1" y="0.8" width="12" height="13.9" rx="1.2" fill="#f6f6f6" stroke="#9c9c9c" stroke-width="1.1"/>
<path d="M3.2 3.4 H10.8 M3.2 5.5 H10.8 M3.2 7.6 H7.2 M3.2 9.7 H10.8 M3.2 11.8 H9" stroke="#b4b4b4" stroke-width="0.8"/>
<rect x="3" y="3" width="8" height="4.4" fill="#c6c6c6"/></svg>
<div class="t" style="left:56.0px;top:452.42px;font-size:12.5px;color:#2b2b2b;font-weight:normal;letter-spacing:0px;">Q1_Robot1_1</div>
<div class="t" style="left:163.3px;top:452.25px;font-size:12.7px;color:#2b2b2b;font-weight:normal;letter-spacing:0px;">1.69 KiB</div>
<div class="t" style="left:309.7px;top:452.00px;font-size:13px;color:#2b2b2b;font-weight:normal;letter-spacing:0px;">yaml File</div>
<div class="t" style="left:456.7px;top:451.61px;font-size:13.45px;color:#2b2b2b;font-weight:normal;letter-spacing:0px;">22 Dec 2023 11:09:03</div>
<svg style="position:absolute;left:34px;top:467px;" width="14" height="16" viewBox="0 0 14 16">
<rect x="1" y="0.8" width="12" height="13.9" rx="1.2" fill="#f6f6f6" stroke="#9c9c9c" stroke-width="1.1"/>
<path d="M3.2 3.4 H10.8 M3.2 5.5 H10.8 M3.2 7.6 H7.2 M3.2 9.7 H10.8 M3.2 11.8 H9" stroke="#b4b4b4" stroke-width="0.8"/>
</svg>
<div class="t" style="left:56.0px;top:470.07px;font-size:12.5px;color:#2b2b2b;font-weight:normal;letter-spacing:0px;">Q1_Robot1_0</div>
<div class="t" style="left:163.3px;top:469.90px;font-size:12.7px;color:#2b2b2b;font-weight:normal;letter-spacing:0px;">1.61 KiB</div>
<div class="t" style="left:309.7px;top:469.65px;font-size:13px;color:#2b2b2b;font-weight:normal;letter-spacing:0px;">yaml File</div>
<div class="t" style="left:456.7px;top:469.26px;font-size:13.45px;color:#2b2b2b;font-weight:normal;letter-spacing:0px;">22 Dec 2023 11:09:03</div>
<svg style="position:absolute;left:8px;top:734.5px;" width="5" height="16" viewBox="0 0 5 16"><circle cx="0.5" cy="0.50" r="0.55" fill="#a0a0a0"/><circle cx="3.9" cy="0.50" r="0.55" fill="#a0a0a0"/><circle cx="0.5" cy="3.35" r="0.55" fill="#a0a0a0"/><circle cx="3.9" cy="3.35" r="0.55" fill="#a0a0a0"/><circle cx="0.5" cy="6.20" r="0.55" fill="#a0a0a0"/><circle cx="3.9" cy="6.20" r="0.55" fill="#a0a0a0"/><circle cx="0.5" cy="9.05" r="0.55" fill="#a0a0a0"/><circle cx="3.9" cy="9.05" r="0.55" fill="#a0a0a0"/><circle cx="0.5" cy="11.90" r="0.55" fill="#a0a0a0"/><circle cx="3.9" cy="11.90" r="0.55" fill="#a0a0a0"/><circle cx="0.5" cy="14.75" r="0.55" fill="#a0a0a0"/><circle cx="3.9" cy="14.75" r="0.55" fill="#a0a0a0"/></svg>
<svg style="position:absolute;left:19px;top:729px;" width="24" height="25" viewBox="0 0 24 25">
<path d="M2 17 Q2 12 6 11.5 H17 Q21 12 22 17 V20 Q22 22.5 19 22.5 H5 Q2 22.5 2 20Z" fill="#d4d4d4" stroke="#aaa" stroke-width="0.8"/>
<path d="M2 19.5 H22 V21 Q22 23 19 23 H5 Q2 23 2 21Z" fill="#b4b4b4"/>
<rect x="10.6" y="7" width="2.6" height="8" fill="#c4c4c4"/>
<circle cx="11.5" cy="4.8" r="3.3" fill="#e2691f"/>
<circle cx="6" cy="16" r="1.4" fill="#e2691f"/>
</svg>
<div class="t" style="left:44.1px;top:735.70px;font-size:13px;color:#222;font-weight:normal;letter-spacing:0px;">Virtual Joystic...</div>
<div style="position:absolute;left:3px;top:759px;width:1537px;height:1px;background:#c6c6c6"></div>
<svg style="position:absolute;left:1527px;top:769px;" width="12" height="12" viewBox="0 0 12 12"><circle cx="9.5" cy="1.5" r="0.6" fill="#b0b0b0"/><circle cx="6.5" cy="4.5" r="0.6" fill="#b0b0b0"/><circle cx="9.5" cy="4.5" r="0.6" fill="#b0b0b0"/><circle cx="3.5" cy="7.5" r="0.6" fill="#b0b0b0"/><circle cx="6.5" cy="7.5" r="0.6" fill="#b0b0b0"/><circle cx="9.5" cy="7.5" r="0.6" fill="#b0b0b0"/><circle cx="0.5" cy="10.5" r="0.6" fill="#b0b0b0"/><circle cx="3.5" cy="10.5" r="0.6" fill="#b0b0b0"/><circle cx="6.5" cy="10.5" r="0.6" fill="#b0b0b0"/><circle cx="9.5" cy="10.5" r="0.6" fill="#b0b0b0"/></svg>
<div class="t" style="left:981.0px;top:84.14px;font-size:12px;color:#2b2b2b;font-weight:normal;letter-spacing:-0.3px;">RTSP:</div>
<div style="position:absolute;left:1029px;top:78px;width:492px;height:21px;border:1px solid #c3c3c3;border-radius:3px;background:#efefef"></div>
<div class="t" style="left:1033.0px;top:83.00px;font-size:13.35px;color:#2b2b2b;font-weight:normal;letter-spacing:0px;">rtsp://admin:abcd1234@192.168.1.202:554/h264/ch1/main/av_tream</div>
<div style="position:absolute;left:972px;top:118px;width:560px;height:256px;background:#c6c6c6"></div>
<svg style="position:absolute;left:973px;top:119px;overflow:hidden" width="558" height="255" viewBox="0 0 558 255"><rect width="558" height="255" fill="#4a4a46"/><defs>
<filter id="bl" filterUnits="userSpaceOnUse" x="-8" y="-8" width="574" height="271"><feGaussianBlur stdDeviation="1.0"/></filter>
<linearGradient id="case" x1="0" y1="0" x2="0" y2="1"><stop offset="0" stop-color="#4c4c45"/><stop offset="0.3" stop-color="#44463f"/><stop offset="0.55" stop-color="#3a3e42"/><stop offset="1" stop-color="#303436"/></linearGradient>
<linearGradient id="cyl" x1="0" y1="0" x2="1" y2="0"><stop offset="0" stop-color="#f2f2f2"/><stop offset="0.7" stop-color="#e8e8e8"/><stop offset="1" stop-color="#8a8a86"/></linearGradient>
<pattern id="perf" width="6" height="7" patternUnits="userSpaceOnUse"><rect width="6" height="7" fill="#d2d2ce"/><rect x="1.5" y="2" width="1.5" height="2.5" fill="#7a7a76"/></pattern>
</defs>
<g filter="url(#bl)">
<rect x="-8" y="-8" width="574" height="271" fill="#4a4a46"/>
<rect x="-8" y="-8" width="574" height="10.5" fill="#707070"/>
<!-- left column -->
<rect x="-8" y="2" width="81" height="12" fill="#3e3e3a"/>
<rect x="-8" y="13" width="81" height="37" fill="#e6e094"/>
<rect x="66" y="13" width="7" height="40" fill="#8a8458"/>
<rect x="-8" y="49" width="81" height="5" fill="#7a7458"/>
<rect x="6" y="29.5" width="19" height="2.2" fill="#333"/>
<rect x="57" y="-8" width="57" height="21" fill="#c8c4c0"/>
<path d="M57 0 L70 0 L62 8 L57 8Z" fill="#d8c040"/>
<path d="M80 0 L114 0 L114 13 L84 13Z" fill="#d6503a"/>
<path d="M96 0 L108 0 L98 13 L86 13Z" fill="#e8e048"/>
<rect x="-8" y="54" width="81" height="7" fill="#c8c8c4"/>
<rect x="-8" y="61" width="81" height="2" fill="#5a5a56"/>
<rect x="-8" y="63" width="81" height="55" fill="#acacaa"/>
<ellipse cx="30" cy="92" rx="30" ry="20" fill="#bcbcb8" opacity="0.8"/>
<rect x="-8" y="63" width="81" height="6" fill="#8a8a86"/>
<rect x="-8" y="118" width="81" height="10" fill="#d2d2ce"/>
<rect x="73" y="13" width="15" height="122" fill="url(#perf)"/>
<rect x="-8" y="128" width="80" height="11" fill="#3a3a36"/>
<path d="M0 128 L17 128 L0 139Z" fill="#e0e040"/>
<rect x="-8" y="139" width="46" height="14" fill="#b0a868"/>
<rect x="38" y="128" width="34" height="18" fill="#4a4a44"/>
<rect x="-8" y="153" width="71" height="28" fill="url(#cyl)"/>
<rect x="-8" y="181" width="71" height="11" fill="#c8c8c8"/>
<rect x="-8" y="192" width="47" height="71" fill="#a89a68"/>
<rect x="1" y="218" width="16" height="45" fill="#c8c8c8"/>
<rect x="39" y="192" width="26" height="41" fill="#2e3030"/>
<rect x="63" y="145" width="9" height="95" fill="#c0c0b8"/>
<rect x="39" y="233" width="33" height="7" fill="#b8b8b0"/>
<rect x="39" y="240" width="49" height="23" fill="#2a2a2a"/>
<rect x="72" y="135" width="16" height="128" fill="#262626"/>
<rect x="72" y="126" width="16" height="22" fill="#c8c8c8"/>
<!-- case -->
<rect x="88" y="17" width="177" height="232" fill="#d6d6d4"/>
<rect x="97" y="23.5" width="157" height="219" fill="url(#case)"/>
<rect x="88" y="249" width="177" height="14" fill="#2a2a2a"/>
<rect x="255" y="226" width="10" height="37" fill="#2e3030"/>
<!-- middle shelf region -->
<rect x="265" y="-8" width="90" height="271" fill="#5a5a56"/>
<rect x="265" y="2" width="90" height="8" fill="#555550"/>
<rect x="265" y="10" width="90" height="40" fill="#7a7a6a"/>
<rect x="265" y="28" width="20" height="22" fill="#c8b870"/>
<rect x="297" y="28" width="45" height="23" fill="#4a4a48"/>
<rect x="295" y="25" width="49" height="5" fill="#c8c8c8"/>
<rect x="280" y="-8" width="13" height="36" fill="#7890c0"/>
<rect x="280" y="18" width="13" height="10" fill="#a0a080"/>
<rect x="265" y="50" width="90" height="11" fill="#cacaca"/>
<rect x="265" y="61" width="90" height="52" fill="#5e5e5a"/>
<rect x="270" y="93" width="50" height="16" fill="#7a7a66"/>
<rect x="290" y="111" width="55" height="8" fill="#e4e4e4"/>
<rect x="265" y="119" width="90" height="10" fill="#cecece"/>
<rect x="345" y="-8" width="3" height="138" fill="#5a5a56"/>
<rect x="265" y="129" width="60" height="95" fill="#3e3e3a"/>
<rect x="265" y="160" width="60" height="64" fill="#33363a"/>
<rect x="265" y="186" width="60" height="3" fill="#a89840"/>
<rect x="265" y="190" width="60" height="10" fill="#9a9a9a"/>
<rect x="255" y="-8" width="10" height="236" fill="#e6e6e6"/>
<!-- posts -->
<rect x="355" y="-8" width="15" height="144" fill="url(#perf)"/>
<rect x="370" y="-8" width="4" height="144" fill="#4a4a48"/>
<rect x="374" y="-8" width="15" height="144" fill="url(#perf)"/>
<!-- fan area -->
<rect x="389" y="-8" width="66" height="148" fill="#8a8a80"/>
<rect x="389" y="2" width="66" height="10" fill="#5a5a50"/>
<rect x="394" y="82" width="50" height="50" fill="#d4d4d8"/><rect x="394" y="82" width="10" height="50" fill="#a8a8a8"/>
<ellipse cx="408" cy="59" rx="50" ry="38" fill="#acacaa" stroke="#2a2a2a" stroke-width="1.3"/>
<g stroke="#555" stroke-width="0.6" fill="none">
<ellipse cx="408" cy="59" rx="44" ry="33"/>
<ellipse cx="408" cy="59" rx="37" ry="28"/>
<ellipse cx="408" cy="59" rx="30" ry="23"/>
<ellipse cx="408" cy="59" rx="23" ry="17"/>
<ellipse cx="408" cy="59" rx="15" ry="11"/>
<path d="M358 59 H458 M408 21 V97 M373 32 L443 86 M443 32 L373 86 M365 40 L451 78 M451 40 L365 78 M390 22 L426 96 M426 22 L390 96"/>
</g>
<path d="M394 50 Q408 42 422 50 L420 70 Q408 76 396 70Z" fill="#2a2a2a"/>
<rect x="404" y="70" width="10" height="66" fill="#222"/>
<!-- yellow box and cabinet -->
<path d="M445 24 L483 -8 L566 -8 L566 18 L454 44Z" fill="#a09860"/>
<path d="M444 24 L482 0 L492 0 L452 27Z" fill="#e6de96"/>
<rect x="520" y="-8" width="46" height="16" fill="#e6de96"/>
<rect x="455" y="13" width="12" height="20" fill="#2a2a2a"/>
<path d="M454 44 L566 18 L566 263 L454 263Z" fill="#383b3b"/>
<rect x="454" y="44" width="30" height="219" fill="#434646"/>
<!-- robot -->
<rect x="319" y="136" width="152" height="17" rx="7" fill="#ececec"/>
<rect x="345" y="157" width="106" height="22" fill="#c6c6c6"/>
<rect x="345" y="178" width="28" height="37" fill="#2c4c8c"/>
<rect x="380" y="178" width="70" height="37" fill="#5a96cc"/>
<rect x="345" y="214" width="105" height="14" fill="#a6a6a6"/>
<rect x="418" y="219" width="13" height="8" fill="#b0e020"/>
<rect x="324" y="151" width="13" height="70" fill="#ececec"/>
<rect x="366" y="151" width="14" height="77" fill="#f0f0f0"/>
<rect x="432" y="153" width="13" height="75" fill="#f0f0f0"/>
<rect x="445" y="153" width="13" height="75" fill="#d6d6d6"/>
<!-- floor / robot body -->
<path d="M160 263 L160 255 L175 241 L203 240 L210 248 L238 248 L252 229 L283 223 L325 221 L345 228 L432 228 L458 216 L566 227 L566 263Z" fill="#eeeeee"/>
<rect x="212" y="247" width="25" height="16" fill="#d8d840"/>
</g>
<!-- timestamp -->
<g fill="#111" font-family="Liberation Mono" font-weight="bold" font-size="15.3">
<text x="17.5" y="19.5" textLength="93" lengthAdjust="spacingAndGlyphs">01–19–2024</text>
<text x="188" y="19.5" textLength="72" lengthAdjust="spacingAndGlyphs">14:17:42</text>
</g>
<g stroke="#111" stroke-width="1.6" fill="none">
<path d="M124 10 H138 V15 H124Z M124 12.5 H138 M122 19.5 H140 M131 15 V19.5 M125 17.3 H137"/>
<path d="M141 11 V19 M147 11 V19 M141 11 H147 M141 14 H147 M141 16.5 H147 M140 19 H148 M149 10 H155 V20 M149 10 V20 M149 13.5 H155 M149 16.5 H155"/>
<path d="M159 10.5 H175 M166 10.5 L163 19.5 M162 14.5 H172 V19.5 M158 19.5 H176"/>
</g>

</svg>
<div style="position:absolute;left:972px;top:374px;width:557px;height:36px;border-left:1px solid #c4c4c4;border-right:1px solid #c4c4c4;border-bottom:2px solid #d0d0d0"></div>
<svg style="position:absolute;left:1011px;top:382px;" width="28" height="28" viewBox="0 0 28 28">
<path d="M4.6 2.5 H18.8 L25.2 8.6 V21.8 Q25.2 24.6 22.4 24.6 H4.6 Q2.5 24.6 2.5 21.8 V5.2 Q2.5 2.5 4.6 2.5Z" fill="none" stroke="#333" stroke-width="2.8" stroke-linejoin="round"/>
<rect x="7.4" y="2.5" width="6" height="4" fill="none" stroke="#333" stroke-width="2.4"/>
<path d="M6.8 14.8 H18.6 M6.8 19.9 H12.4" stroke="#333" stroke-width="2.6" stroke-linecap="round"/>
</svg>
<svg style="position:absolute;left:1087px;top:381px;" width="17" height="29" viewBox="0 0 17 29">
<path d="M5.2 17.2 V5.6 A3.3 3.3 0 0 1 11.8 5.6 V17.2 A5.9 5.9 0 1 1 5.2 17.2Z" fill="none" stroke="#333" stroke-width="2.6" stroke-linejoin="round"/>
<path d="M8.5 10.5 V19" stroke="#333" stroke-width="2"/>
<circle cx="8.5" cy="21.3" r="2.3" fill="none" stroke="#333" stroke-width="2"/>
</svg>
<svg style="position:absolute;left:1148px;top:383px;" width="28" height="24" viewBox="0 0 28 24">
<rect x="2.2" y="2" width="23.6" height="20.6" fill="none" stroke="#111" stroke-width="2.1" stroke-linejoin="round"/>
<path d="M6 11.6 V6.6 H11.3" fill="none" stroke="#111" stroke-width="2"/>
<path d="M22.4 13 V17.3 H17" fill="none" stroke="#111" stroke-width="2"/>
</svg>
<div class="t" style="left:1224.3px;top:383.80px;font-size:21.5px;color:#111;font-weight:bold;letter-spacing:0px;">0</div>
<svg style="position:absolute;left:1265px;top:381px;" width="29" height="29" viewBox="0 0 29 29">
<circle cx="14.5" cy="13.8" r="11.9" fill="none" stroke="#111" stroke-width="2"/>
<circle cx="14.5" cy="13.8" r="3.5" fill="#111"/>
</svg>
<svg style="position:absolute;left:960px;top:378.5px;" width="3" height="18" viewBox="0 0 3 18"><circle cx="0.5" cy="0.50" r="0.6" fill="#9a9a9a"/><circle cx="0.5" cy="3.60" r="0.6" fill="#9a9a9a"/><circle cx="0.5" cy="6.70" r="0.6" fill="#9a9a9a"/><circle cx="0.5" cy="9.80" r="0.6" fill="#9a9a9a"/><circle cx="0.5" cy="12.90" r="0.6" fill="#9a9a9a"/><circle cx="0.5" cy="16.00" r="0.6" fill="#9a9a9a"/></svg>
<div style="position:absolute;left:973px;top:437px;width:556px;height:275px;border:1px solid #cfcfcf;"></div>
<svg style="position:absolute;left:993px;top:457px;" width="30" height="30" viewBox="0 0 30 30"><rect x="1.75" y="1.75" width="26.5" height="26.5" rx="2.6" fill="#f5f5f5" stroke="#111" stroke-width="2.9"/><path d="M15 8 V21.6 M8.2 14.8 H21.8" stroke="#111" stroke-width="2.7" stroke-linecap="round"/></svg>
<svg style="position:absolute;left:1121px;top:457px;" width="30" height="30" viewBox="0 0 30 30"><rect x="1.75" y="1.75" width="26.5" height="26.5" rx="2.6" fill="#f5f5f5" stroke="#111" stroke-width="2.9"/><path d="M8 14.8 H22" stroke="#111" stroke-width="2.8" stroke-linecap="round"/></svg>
<svg style="position:absolute;left:993px;top:604px;" width="30" height="30" viewBox="0 0 30 30"><rect x="1.75" y="1.75" width="26.5" height="26.5" rx="2.6" fill="#f5f5f5" stroke="#111" stroke-width="2.9"/><path d="M15 8 V21.6 M8.2 14.8 H21.8" stroke="#111" stroke-width="2.7" stroke-linecap="round"/></svg>
<svg style="position:absolute;left:1121px;top:604px;" width="30" height="30" viewBox="0 0 30 30"><rect x="1.75" y="1.75" width="26.5" height="26.5" rx="2.6" fill="#f5f5f5" stroke="#111" stroke-width="2.9"/><path d="M8 14.8 H22" stroke="#111" stroke-width="2.8" stroke-linecap="round"/></svg>
<svg style="position:absolute;left:1052px;top:487px;" width="40" height="40" viewBox="0 0 40 40"><rect x="1.8" y="1.8" width="36.4" height="36.4" rx="2.6" fill="#f5f5f5" stroke="#333" stroke-width="3.0"/><path d="M9.6 23.2 L19.8 12.8 L30.2 23.2Z" fill="none" stroke="#333" stroke-width="3.6" stroke-linejoin="round"/></svg>
<svg style="position:absolute;left:1052px;top:585px;" width="40" height="40" viewBox="0 0 40 40"><rect x="1.8" y="1.8" width="36.4" height="36.4" rx="2.6" fill="#f5f5f5" stroke="#333" stroke-width="3.0"/><path d="M9.6 14.2 L19.8 24.6 L30.2 14.2Z" fill="none" stroke="#333" stroke-width="3.6" stroke-linejoin="round"/></svg>
<svg style="position:absolute;left:1003px;top:536px;" width="40" height="40" viewBox="0 0 40 40"><rect x="1.8" y="1.8" width="36.4" height="36.4" rx="2.6" fill="#f5f5f5" stroke="#333" stroke-width="3.0"/><path d="M23.6 9 L13.2 19.5 L23.6 30Z" fill="none" stroke="#333" stroke-width="3.6" stroke-linejoin="round"/></svg>
<svg style="position:absolute;left:1101px;top:536px;" width="40" height="40" viewBox="0 0 40 40"><rect x="1.8" y="1.8" width="36.4" height="36.4" rx="2.6" fill="#f5f5f5" stroke="#333" stroke-width="3.0"/><path d="M15.6 9 L26 19.5 L15.6 30Z" fill="none" stroke="#333" stroke-width="3.6" stroke-linejoin="round"/></svg>
<div class="t" style="left:1174.8px;top:453.84px;font-size:12px;color:#3a3a3a;font-weight:bold;letter-spacing:0px;">P:</div>
<div style="position:absolute;left:1193px;top:448px;width:172px;height:21px;border:1px solid #c6c6c6;border-radius:3px;"></div>
<div class="t" style="left:1196.6px;top:453.84px;font-size:12px;color:#a2a2a2;font-weight:normal;letter-spacing:1.05px;">(-180~180◦)</div>
<div class="t" style="left:1174.8px;top:527.84px;font-size:12px;color:#3a3a3a;font-weight:bold;letter-spacing:0px;">T:</div>
<div style="position:absolute;left:1193px;top:522px;width:172px;height:21px;border:1px solid #c6c6c6;border-radius:3px;"></div>
<div class="t" style="left:1196.6px;top:527.84px;font-size:12px;color:#a2a2a2;font-weight:normal;letter-spacing:1.05px;">(-25~90◦)</div>
<div class="t" style="left:1174.8px;top:602.84px;font-size:12px;color:#3a3a3a;font-weight:bold;letter-spacing:0px;">Z:</div>
<div style="position:absolute;left:1193px;top:597px;width:172px;height:21px;border:1px solid #c6c6c6;border-radius:3px;"></div>
<div class="t" style="left:1196.6px;top:602.84px;font-size:12px;color:#a2a2a2;font-weight:normal;letter-spacing:1.05px;">(1~20)</div>
<div style="position:absolute;left:1204px;top:625px;width:76px;height:21px;border:1px solid #c2c2c2;border-radius:2px;background:linear-gradient(#f6f6f6,#ececec)"></div>
<div class="t" style="left:1221.3px;top:630.00px;font-size:13px;color:#2b2b2b;font-weight:normal;letter-spacing:0px;">request</div>
<div style="position:absolute;left:1288px;top:625px;width:77px;height:21px;border:1px solid #c2c2c2;border-radius:2px;background:linear-gradient(#f6f6f6,#ececec)"></div>
<div class="t" style="left:1312.7px;top:630.00px;font-size:13px;color:#2b2b2b;font-weight:normal;letter-spacing:0px;">reset</div>
<div style="position:absolute;left:983px;top:651px;width:12px;height:12px;border:1px solid #c4c4c4;background:#f2f2f2;border-radius:1px"></div>
<div class="t" style="left:1002.3px;top:652.93px;font-size:12.6px;color:#2b2b2b;font-weight:normal;letter-spacing:0px;">Publish</div>
<div class="t" style="left:1075.5px;top:650.36px;font-size:17.3px;color:#2b2b2b;font-weight:normal;letter-spacing:0px;">Hz</div>
<div style="position:absolute;left:1100px;top:645px;width:52px;height:25px;border:1px solid #c6c6c6;border-radius:3px;"></div>
<div style="position:absolute;left:1139px;top:646px;width:1px;height:24px;background:#d4d4d4"></div>
<svg style="position:absolute;left:1141px;top:649px;" width="11" height="18" viewBox="0 0 11 18"><path d="M2.5 5.2 L5.5 2.2 L8.5 5.2Z M2.5 12.3 L5.5 15.3 L8.5 12.3Z" fill="#555"/></svg>
<div class="t" style="left:1105.7px;top:653.42px;font-size:12.5px;color:#2b2b2b;font-weight:normal;letter-spacing:0px;">10</div>
<div class="t" style="left:1025.7px;top:687.96px;font-size:12.8px;color:#2b2b2b;font-weight:normal;letter-spacing:0px;">PTZ Controller</div>
<div style="position:absolute;left:1372px;top:447px;width:146px;height:227px;border:1px solid #bdbdbd;"></div>
<div class="t" style="left:1409.7px;top:683.42px;font-size:18.4px;color:#222;font-weight:normal;letter-spacing:0px;">Schematic</div>
<svg style="position:absolute;left:1385px;top:485px;" width="125" height="130" viewBox="0 0 125 130">
<g fill="none" stroke="#6a6a6a" stroke-width="0.9">
<path d="M43.5 103 V55 Q44 27 80 25.5 Q117 26 117.5 60 V103"/>
<path d="M43.5 103 Q80 134 117.5 103"/>
<path d="M43.5 89 Q80 120 117.5 89"/>
<path d="M83 85 V60 Q84 34 100 33 Q117 34 117.5 60"/>
<path d="M43.5 84 Q55 96 76 97 Q83 97 83 85"/>
<rect x="48.5" y="33.5" width="23" height="42" rx="9"/>
<circle cx="59.7" cy="43" r="7"/>
<circle cx="59.7" cy="64.5" r="6.3"/>
<path d="M46 42 V70" stroke-width="1.6" stroke="#9a9a9a"/>
</g>
<text x="31.3" y="16.3" font-size="13.4" font-family="Liberation Sans" fill="#2b2b2b">Title</text>
<text x="87.8" y="76" font-size="13.4" font-family="Liberation Sans" fill="#2b2b2b">Pan</text>
<path d="M39 112 Q10 85 17 55 Q21 38 33 28" fill="none" stroke="#77bb33" stroke-width="2.4"/>
<path d="M43 26 L30 24.5 L35.5 34.5Z" fill="#77bb33"/>
<path d="M54.5 22 V34 M48.5 28 H60.5" stroke="#8cc653" stroke-width="1.1"/>
<path d="M41 125.5 H49" stroke="#8cc653" stroke-width="1.3"/>
<path d="M15 53 Q2 58 7 66 Q20 80 82 82" fill="none" stroke="#dd3b2e" stroke-width="3"/>
<path d="M10 58 L14.5 51.6 L18.8 55.5" fill="none" stroke="#dd3b2e" stroke-width="1.8"/>
<path d="M95.5 82.4 L79.5 73 L78.5 90Z" fill="#dd3b2e"/>
<path d="M106 79.5 V93 M99 86.2 H112" stroke="#e03a3a" stroke-width="1.2"/>
</svg>
</body></html>
